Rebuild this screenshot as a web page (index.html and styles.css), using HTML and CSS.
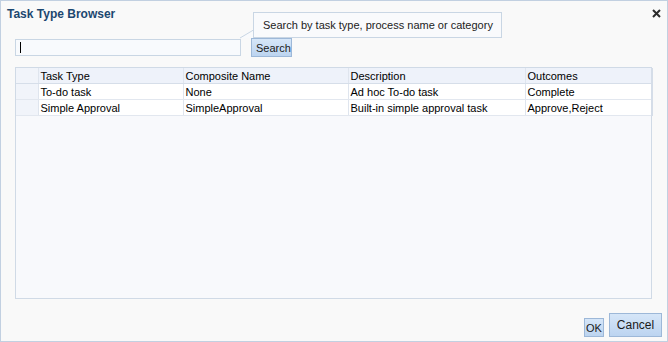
FILE: index.html
```html
<!DOCTYPE html>
<html lang="en">
<head>
<meta charset="UTF-8">
<title>Task Type Browser</title>
<link rel="stylesheet" href="styles.css">
</head>
<body>
<div class="dialog">
  <div class="title-bar">
    <span class="title">Task Type Browser</span>
    <svg class="close" width="9" height="9" viewBox="0 0 9 9">
      <path d="M1 1 L8 8 M8 1 L1 8" stroke="#2b2b2b" stroke-width="2"/>
    </svg>
  </div>

  <div class="search-row">
    <div class="search-input"><span class="caret"></span></div>
    <button class="btn search-btn">Search</button>
    <div class="hint">
      Search by task type, process name or category
      <svg class="notch" width="15" height="10" viewBox="0 0 15 10">
        <polygon points="14,0 1,9 14,9" fill="#f9fafc"/>
        <path d="M14.5 0.5 L14.5 1 L1 9" stroke="#c9d6e4" fill="none"/>
      </svg>
    </div>
  </div>

  <div class="grid">
    <table>
      <colgroup>
        <col class="c0"><col class="c1"><col class="c2"><col class="c3"><col class="c4">
      </colgroup>
      <thead>
        <tr><th></th><th>Task Type</th><th>Composite Name</th><th>Description</th><th>Outcomes</th></tr>
      </thead>
      <tbody>
        <tr><td></td><td>To-do task</td><td>None</td><td>Ad hoc To-do task</td><td>Complete</td></tr>
        <tr><td></td><td>Simple Approval</td><td>SimpleApproval</td><td>Built-in simple approval task</td><td>Approve,Reject</td></tr>
      </tbody>
    </table>
  </div>

  <div class="footer">
    <button class="btn ok">OK</button>
    <button class="btn cancel">Cancel</button>
  </div>
</div>
</body>
</html>
```

FILE: styles.css
```css
body {
  margin: 0;
  font-family: "Liberation Sans", Arial, sans-serif;
  font-size: 11px;
  color: #111;
}

.dialog {
  box-sizing: border-box;
  width: 668px;
  height: 342px;
  border: 1px solid #c2d0e1;
  background: #f9f9f9;
  display: flex;
  flex-direction: column;
}

.title-bar {
  display: flex;
  justify-content: space-between;
  align-items: center;
  height: 26px;
  padding: 0 6px 0 6px;
}
.title {
  font-size: 12px;
  font-weight: bold;
  color: #1c4770;
}
.close {
  margin-top: -2px;
}

.search-row {
  position: relative;
  display: flex;
  align-items: center;
  margin: 11px 0 0 14px;
  height: 19px;
}
.search-input {
  box-sizing: border-box;
  width: 226px;
  height: 17px;
  border: 1px solid #c9d6e4;
  background: #f8fafd;
  display: flex;
  align-items: center;
  padding-left: 4px;
}
.caret {
  width: 1px;
  height: 11px;
  background: #000;
}

.btn {
  font-family: "Liberation Sans", Arial, sans-serif;
  font-size: 11px;
  color: #1a1a1a;
  border: 1px solid #9db8d8;
  background: linear-gradient(#d6e6f8, #bcd4f0);
  padding: 0 4px;
  margin: 0;
}
.search-btn {
  margin-left: 10px;
  height: 19px;
  width: 41px;
  position: relative;
  z-index: 2;
}

.hint {
  position: absolute;
  left: 238px;
  top: -26px;
  box-sizing: border-box;
  width: 249px;
  height: 26px;
  border: 1px solid #c9d6e4;
  background: #f9fafc;
  padding: 6px 0 0 9px;
  color: #222;
  z-index: 1;
}
.notch {
  position: absolute;
  left: -15px;
  bottom: -2px;
}

.grid {
  box-sizing: border-box;
  margin: 10px 15px 0 14px;
  height: 232px;
  border: 1px solid #d0dae6;
  background: #f8f9fc;
}
table {
  border-collapse: collapse;
  table-layout: fixed;
  width: 636px;
}
.c0 { width: 22px; }
.c1 { width: 145px; }
.c2 { width: 165px; }
.c3 { width: 177px; }
.c4 { width: 127px; }

th, td {
  height: 15px;
  padding: 0 0 0 2px;
  text-align: left;
  font-weight: normal;
  white-space: nowrap;
  color: #000;
  border-right: 1px solid #dfe5ee;
  border-bottom: 1px solid #e2e7ef;
}
th {
  background: #eef2fa;
  border-bottom-color: #d6dee9;
}
td {
  background: #fff;
}
th:first-child, td:first-child {
  background: #f1f4fa;
}
th:last-child, td:last-child {
  border-right: 2px solid #d5dde8;
}

.footer {
  margin-top: auto;
  display: flex;
  justify-content: flex-end;
  align-items: flex-end;
  gap: 5px;
  padding: 0 5px 4px 0;
}
.ok {
  height: 19px;
  width: 20px;
  padding: 0;
}
.cancel {
  height: 24px;
  width: 53px;
  font-size: 12px;
}
```
